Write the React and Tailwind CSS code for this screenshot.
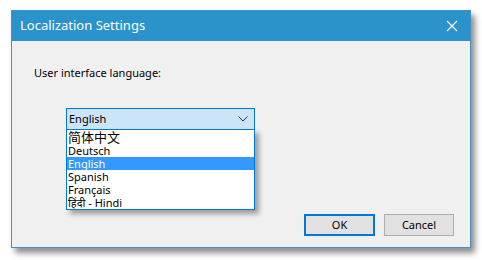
import React from 'react';

const languages = ['简体中文', 'Deutsch', 'English', 'Spanish', 'Français', 'हिंदी - Hindi'];

const App = () => {
  return (
    <div
      className="w-[482px] h-[260px] bg-white pl-[11px] pt-[10px]"
      style={{ fontFamily: '"Noto Sans", "Noto Sans CJK SC", "Noto Sans Devanagari", sans-serif' }}
    >
      <div className="w-[460px] h-[238px] border border-[#4a8fc4] bg-[#f0f0f0] flex flex-col shadow-[4px_5px_6px_rgba(0,0,0,0.45)]">
        {/* Title bar */}
        <div className="h-[30px] bg-[#2a93cc] flex items-center justify-between pl-[8px] pr-[12px] shrink-0">
          <span className="text-white text-[13px]">Localization Settings</span>
          <svg width="12" height="12" viewBox="0 0 12 12" className="text-white">
            <path d="M1 1 L11 11 M11 1 L1 11" stroke="currentColor" strokeWidth="1.2" />
          </svg>
        </div>

        {/* Body */}
        <div className="flex-1 flex flex-col pl-[22px] pr-[16px]">
          <div className="pt-[25px] text-[11px] text-black leading-[14px]">User interface language:</div>

          <div className="relative mt-[28px] ml-[32px] w-[189px]">
            <div className="h-[22px] border border-[#0078d7] bg-[#cce4f7] flex items-center justify-between pl-[2px] pr-[6px] text-[11px] text-black">
              <span>English</span>
              <svg width="10" height="6" viewBox="0 0 10 6">
                <path d="M0.5 0.5 L5 5 L9.5 0.5" stroke="#333" strokeWidth="1" fill="none" />
              </svg>
            </div>
            <div className="absolute left-0 top-[21px] w-[189px] border border-[#0078d7] bg-white shadow-[4px_4px_5px_rgba(0,0,0,0.35)] z-10">
              {languages.map((lang) => (
                <div
                  key={lang}
                  className={`flex items-center pl-[1px] ${
                    lang === 'English' ? 'bg-[#3399ff] text-white' : 'text-black'
                  } ${lang === '简体中文' ? 'text-[13px] h-[14px] leading-[14px]' : 'text-[11px] h-[13px] leading-[13px]'}`}
                >
                  {lang}
                </div>
              ))}
            </div>
          </div>

          <div className="mt-auto mb-[11px] flex justify-end gap-[9px]">
            <button className="w-[71px] h-[22px] border-2 border-[#0078d7] bg-[#e1e1e1] text-[11px] text-black">
              OK
            </button>
            <button className="w-[70px] h-[22px] border border-[#adadad] bg-[#e1e1e1] text-[11px] text-black">
              Cancel
            </button>
          </div>
        </div>
      </div>
    </div>
  );
};

export default App;
